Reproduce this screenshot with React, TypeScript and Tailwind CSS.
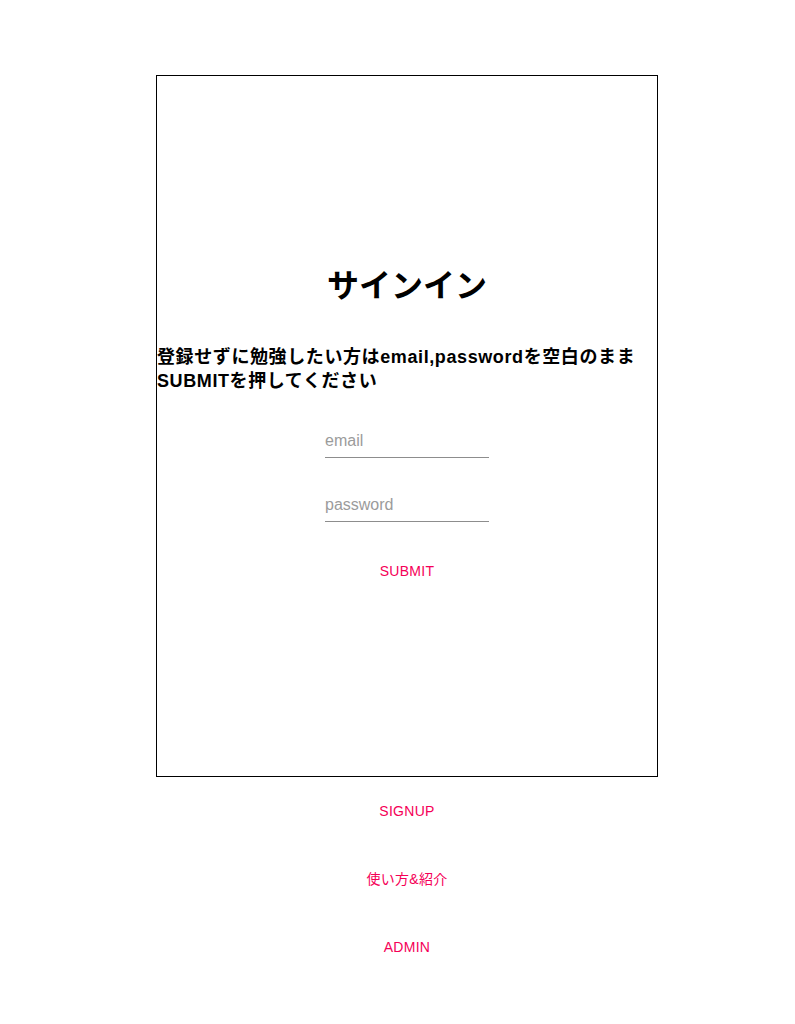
const font = { fontFamily: '"Liberation Sans", "Noto Sans CJK JP", sans-serif' };

function UnderlineInput({ placeholder, type }: { placeholder: string; type: string }) {
  return (
    <div className="w-[164px] border-b border-[#8d8d8d]">
      <input
        type={type}
        placeholder={placeholder}
        className="block h-[32px] w-full bg-transparent pt-[6px] pb-[7px] text-[16px] leading-[19px] text-black outline-none placeholder:text-[#9b9b9b]"
      />
    </div>
  );
}

function LinkButton({ label }: { label: string }) {
  return (
    <button className="flex h-[36px] items-center justify-center px-2 text-[14px] tracking-[0.02em] text-[#f50057]">
      {label}
    </button>
  );
}

export default function App() {
  return (
    <main className="min-h-screen bg-white text-black" style={font}>
      <div className="ml-[156px] w-[502px] pt-[75px]">
        <div className="flex h-[702px] flex-col border border-black pt-[191px]">
          <h1 className="h-[38px] text-center text-[32px] font-bold leading-[38px]">サインイン</h1>
          <p className="mt-[40px] text-[18px] font-bold leading-[24px] tracking-[0.6px]">
            登録せずに勉強したい方はemail,passwordを空白のままSUBMITを押してください
          </p>
          <div className="mt-[32px] flex flex-col items-center gap-[31px]">
            <UnderlineInput placeholder="email" type="email" />
            <UnderlineInput placeholder="password" type="password" />
            <LinkButton label="SUBMIT" />
          </div>
        </div>
        <div className="mt-[16px] flex flex-col items-center gap-[32px]">
          <LinkButton label="SIGNUP" />
          <LinkButton label="使い方&紹介" />
          <LinkButton label="ADMIN" />
        </div>
      </div>
    </main>
  );
}
